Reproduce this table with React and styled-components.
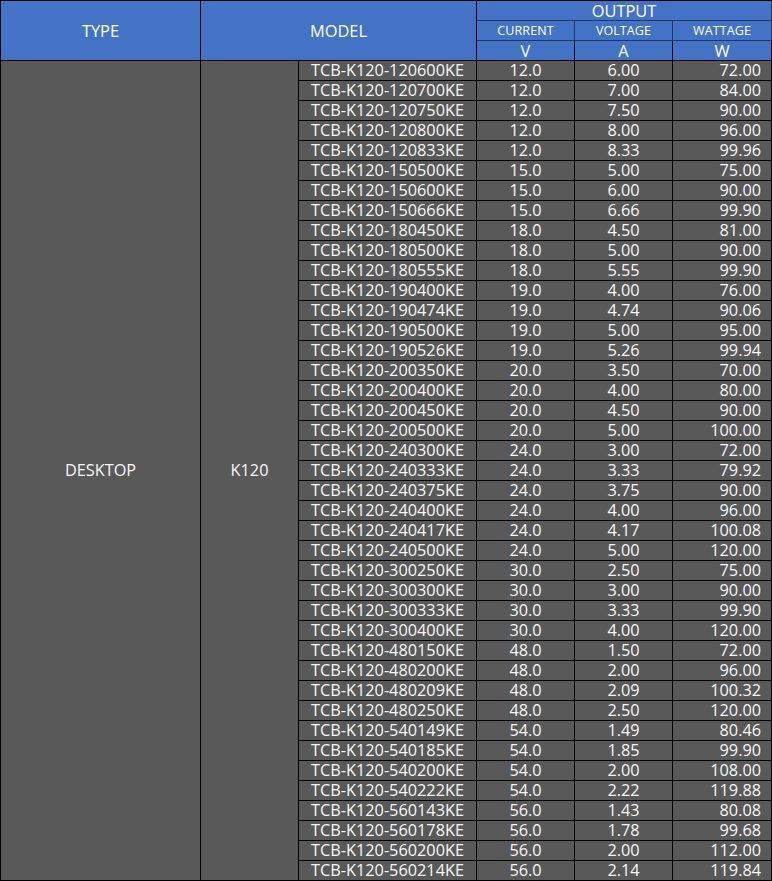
import React from "react";
import styled, { createGlobalStyle } from "styled-components";

const Global = createGlobalStyle`
  html, body { margin: 0; padding: 0; background: #ffffff; }
  body { font-family: "Open Sans", "Noto Sans", sans-serif; }
`;

const rows = [
  ["120600", "12.0", "6.00", "72.00"],
  ["120700", "12.0", "7.00", "84.00"],
  ["120750", "12.0", "7.50", "90.00"],
  ["120800", "12.0", "8.00", "96.00"],
  ["120833", "12.0", "8.33", "99.96"],
  ["150500", "15.0", "5.00", "75.00"],
  ["150600", "15.0", "6.00", "90.00"],
  ["150666", "15.0", "6.66", "99.90"],
  ["180450", "18.0", "4.50", "81.00"],
  ["180500", "18.0", "5.00", "90.00"],
  ["180555", "18.0", "5.55", "99.90"],
  ["190400", "19.0", "4.00", "76.00"],
  ["190474", "19.0", "4.74", "90.06"],
  ["190500", "19.0", "5.00", "95.00"],
  ["190526", "19.0", "5.26", "99.94"],
  ["200350", "20.0", "3.50", "70.00"],
  ["200400", "20.0", "4.00", "80.00"],
  ["200450", "20.0", "4.50", "90.00"],
  ["200500", "20.0", "5.00", "100.00"],
  ["240300", "24.0", "3.00", "72.00"],
  ["240333", "24.0", "3.33", "79.92"],
  ["240375", "24.0", "3.75", "90.00"],
  ["240400", "24.0", "4.00", "96.00"],
  ["240417", "24.0", "4.17", "100.08"],
  ["240500", "24.0", "5.00", "120.00"],
  ["300250", "30.0", "2.50", "75.00"],
  ["300300", "30.0", "3.00", "90.00"],
  ["300333", "30.0", "3.33", "99.90"],
  ["300400", "30.0", "4.00", "120.00"],
  ["480150", "48.0", "1.50", "72.00"],
  ["480200", "48.0", "2.00", "96.00"],
  ["480209", "48.0", "2.09", "100.32"],
  ["480250", "48.0", "2.50", "120.00"],
  ["540149", "54.0", "1.49", "80.46"],
  ["540185", "54.0", "1.85", "99.90"],
  ["540200", "54.0", "2.00", "108.00"],
  ["540222", "54.0", "2.22", "119.88"],
  ["560143", "56.0", "1.43", "80.08"],
  ["560178", "56.0", "1.78", "99.68"],
  ["560200", "56.0", "2.00", "112.00"],
  ["560214", "56.0", "2.14", "119.84"],
];

const Table = styled.table`
  border-collapse: separate;
  border-spacing: 0;
  table-layout: fixed;
  width: 772px;
  border-top: 1px solid #000;
  border-left: 1px solid #000;
`;

const HeadCell = styled.th`
  background: #4472c4;
  color: #ffffff;
  font-weight: 400;
  font-size: ${(p) => (p.$small ? "12.5px" : "16.4px")};
  letter-spacing: ${(p) => (p.$small ? "0.1px" : "0")};
  height: 19px;
  line-height: 18px;
  padding: 0;
  text-align: center;
  vertical-align: middle;
  border-right: 1px solid ${(p) => (p.$dark ? "#000" : "#1f3864")};
  border-bottom: 1px solid ${(p) => (p.$dark ? "#000" : "#1f3864")};
  white-space: nowrap;
`;

const Cell = styled.td`
  background: #595959;
  color: #f7f7f7;
  font-size: 16.3px;
  height: 19px;
  line-height: 19px;
  padding: ${(p) =>
    p.$align === "left" ? "0 0 0 12px" : p.$align === "right" ? "0 10px 0 0" : "0"};
  text-align: ${(p) => p.$align || "center"};
  vertical-align: middle;
  border-right: 1px solid #000;
  border-bottom: 1px solid #000;
  white-space: nowrap;
`;

export default function App() {
  return (
    <>
      <Global />
      <Table>
        <colgroup>
          <col style={{ width: 200 }} />
          <col style={{ width: 98 }} />
          <col style={{ width: 178 }} />
          <col style={{ width: 98 }} />
          <col style={{ width: 98 }} />
          <col style={{ width: 99 }} />
        </colgroup>
        <thead>
          <tr>
            <HeadCell rowSpan={3} $dark>TYPE</HeadCell>
            <HeadCell rowSpan={3} colSpan={2} $dark>MODEL</HeadCell>
            <HeadCell colSpan={3}>OUTPUT</HeadCell>
          </tr>
          <tr>
            <HeadCell $small>CURRENT</HeadCell>
            <HeadCell $small>VOLTAGE</HeadCell>
            <HeadCell $small>WATTAGE</HeadCell>
          </tr>
          <tr>
            <HeadCell $dark>V</HeadCell>
            <HeadCell $dark>A</HeadCell>
            <HeadCell $dark>W</HeadCell>
          </tr>
        </thead>
        <tbody>
          {rows.map((r, i) => (
            <tr key={r[0]}>
              {i === 0 && (
                <>
                  <Cell rowSpan={rows.length}>DESKTOP</Cell>
                  <Cell rowSpan={rows.length}>K120</Cell>
                </>
              )}
              <Cell $align="left">{`TCB-K120-${r[0]}KE`}</Cell>
              <Cell>{r[1]}</Cell>
              <Cell>{r[2]}</Cell>
              <Cell $align="right">{r[3]}</Cell>
            </tr>
          ))}
        </tbody>
      </Table>
    </>
  );
}
